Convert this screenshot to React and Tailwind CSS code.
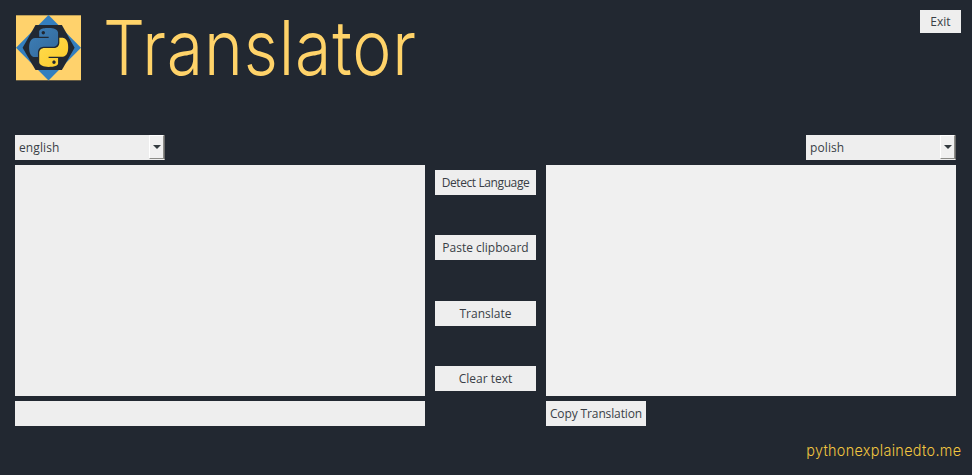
const SNAKE =
  'M14.25.18l.9.2.73.26.59.3.45.32.34.34.25.34.16.33.1.3.04.26.02.2-.01.13V8.5l-.05.63-.13.55-.21.46-.26.38-.3.31-.33.25-.35.19-.35.14-.33.1-.3.07-.26.04-.21.02H8.77l-.69.05-.59.14-.5.22-.41.27-.33.32-.27.35-.2.36-.15.37-.1.35-.07.32-.04.27-.02.21v3.06H3.17l-.21-.03-.28-.07-.32-.12-.35-.18-.36-.26-.36-.36-.35-.46-.32-.59-.28-.73-.21-.88-.14-1.05-.05-1.23.06-1.22.16-1.04.24-.87.32-.71.36-.57.4-.44.42-.33.42-.24.4-.16.36-.1.32-.05.24-.01h.16l.06.01h8.16v-.83H6.18l-.01-2.75-.02-.37.05-.34.11-.31.17-.28.25-.26.31-.23.38-.2.44-.18.51-.15.58-.12.64-.1.71-.06.77-.04.84-.02 1.27.05zm-6.3 1.98l-.23.33-.08.41.08.41.23.34.33.22.41.09.41-.09.33-.22.23-.34.08-.41-.08-.41-.23-.33-.33-.22-.41-.09-.41.09z'

function Logo() {
  return (
    <svg width="67" height="66" viewBox="15 15 67 66" className="shrink-0">
      <defs>
        <linearGradient id="blue" x1="0" y1="0" x2="1" y2="1">
          <stop offset="0" stopColor="#3d80b8" />
          <stop offset="1" stopColor="#33679a" />
        </linearGradient>
        <linearGradient id="gold" x1="1" y1="1" x2="0" y2="0">
          <stop offset="0" stopColor="#ffdc50" />
          <stop offset="1" stopColor="#fccb28" />
        </linearGradient>
      </defs>
      <rect x="16" y="15.3" width="65" height="65" fill="#ffd26c" />
      <path d="M48.5 15L81 47.7 48.5 80.5 16 47.7z" fill="#347fbf" />
      <path d="M35.5 25h26.4L74.6 47.7 61.9 70H35.5L22.6 47.7z" fill="#212832" />
      <g transform="translate(29.2 28) scale(1.62)">
        <path d={SNAKE} fill="url(#blue)" />
        <path d={SNAKE} fill="url(#gold)" transform="rotate(180 12 12)" />
      </g>
    </svg>
  )
}

function Button({ className, children }) {
  return (
    <button className={`flex items-center justify-center whitespace-nowrap bg-[#eeeeee] ${className}`}>
      {children}
    </button>
  )
}

function Select({ value }) {
  return (
    <div className="flex h-[25px] w-[150px] items-stretch bg-[#eeeeee]">
      <span className="flex flex-1 items-center pt-px pl-1 tracking-[0.1px]">{value}</span>
      <span className="flex w-4 border-r border-b border-[#696969] border-b-[#eeeeee]">
        <span className="flex flex-1 items-center justify-center border border-[#8c8c88] border-t-white border-l-white bg-[#f0f0f0]">
          <svg width="8" height="4" viewBox="0 0 8 4">
            <path d="M0 0h8L4 4z" fill="#333a3f" />
          </svg>
        </span>
      </span>
    </div>
  )
}

export default function App() {
  return (
    <div className="flex h-[475px] w-[972px] flex-col overflow-hidden bg-[#222831] font-['Open_Sans','Noto_Sans',sans-serif] text-[12px] text-[#393e46]">
      <header className="flex h-[135px] items-start pt-[10px] pr-[11px] pl-[15px]">
        <div className="mt-[5px]">
          <Logo />
        </div>
        <h1 className="mt-[-3px] ml-[21px] origin-left scale-x-[0.87] font-['Inter',sans-serif] text-[76px] leading-[80px] font-light tracking-[1px] text-[#ffd369]">
          Translator
        </h1>
        <Button className="ml-auto h-[23px] w-[41px]">Exit</Button>
      </header>
      <div className="flex h-[30px] justify-between pr-4 pl-[15px]">
        <Select value="english" />
        <Select value="polish" />
      </div>
      <main className="flex h-[231px] gap-[10px] pl-[15px]">
        <div className="w-[410px] bg-[#eeeeee]" />
        <div className="flex w-[101px] flex-col justify-between py-[5px]">
          <Button className="h-[25px] pt-px tracking-[-0.4px]">Detect Language</Button>
          <Button className="h-[25px] pt-px">Paste clipboard</Button>
          <Button className="h-[25px] pt-px">Translate</Button>
          <Button className="h-[25px] pt-px">Clear text</Button>
        </div>
        <div className="w-[410px] bg-[#f0f0f0]" />
      </main>
      <div className="mt-[5px] flex h-[25px] gap-[121px] pl-[15px]">
        <div className="w-[410px] bg-[#eeeeee]" />
        <Button className="w-[100px] pt-px tracking-[-0.12px]">Copy Translation</Button>
      </div>
      <footer className="mt-[14px] flex justify-end pr-[11px] font-['Inter',sans-serif] text-[16px] leading-5 font-light text-[#f3c640]">
        <span className="origin-right scale-x-[0.9] tracking-[0.35px]">pythonexplainedto.me</span>
      </footer>
    </div>
  )
}
